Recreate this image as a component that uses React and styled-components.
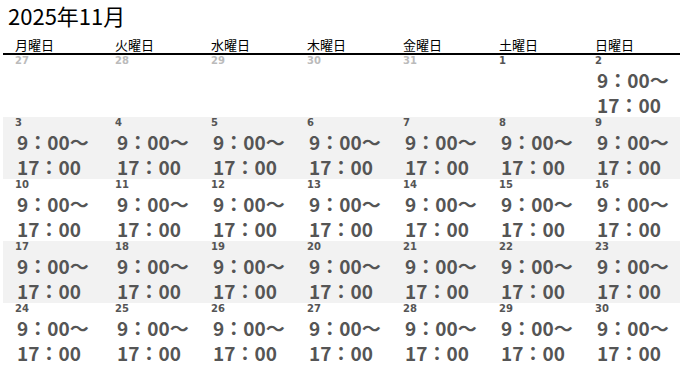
import styled, { createGlobalStyle } from "styled-components";

const GlobalStyle = createGlobalStyle`
  body {
    margin: 0;
    background: #fff;
    font-family: "Noto Sans CJK JP", "DejaVu Sans", sans-serif;
  }
`;

const DAYS = ["月曜日", "火曜日", "水曜日", "木曜日", "金曜日", "土曜日", "日曜日"];

const WEEKS = [
  [
    { d: 27, out: true },
    { d: 28, out: true },
    { d: 29, out: true },
    { d: 30, out: true },
    { d: 31, out: true },
    { d: 1, blank: true },
    { d: 2 },
  ],
  [3, 4, 5, 6, 7, 8, 9].map((d) => ({ d })),
  [10, 11, 12, 13, 14, 15, 16].map((d) => ({ d })),
  [17, 18, 19, 20, 21, 22, 23].map((d) => ({ d })),
  [24, 25, 26, 27, 28, 29, 30].map((d) => ({ d })),
];

const App = () => {
  return (
    <>
      <GlobalStyle />
      <Page>
        <Title>2025年11月</Title>
        <HeadRow>
          {DAYS.map((day) => (
            <HeadCell key={day}>{day}</HeadCell>
          ))}
        </HeadRow>
        {WEEKS.map((week, i) => (
          <WeekRow key={i} $shaded={i % 2 === 1}>
            {week.map((cell) => (
              <DayCell key={cell.d}>
                <DateNum $out={cell.out}>{cell.d}</DateNum>
                {!cell.out && !cell.blank && (
                  <>
                    <Hours>9：00～</Hours>
                    <Hours>17：00</Hours>
                  </>
                )}
              </DayCell>
            ))}
          </WeekRow>
        ))}
      </Page>
    </>
  );
};

export default App;

// style
const Page = styled.div`
  width: 677px;
  padding: 0 0 0 3px;
`;
const Title = styled.h1`
  margin: 0;
  padding-left: 5px;
  height: 30px;
  line-height: 30px;
  font-size: 22px;
  font-weight: 400;
  color: #000;
`;
const Columns = styled.div`
  display: grid;
  grid-template-columns: 100px repeat(5, 96px) 1fr;
`;
const HeadRow = styled(Columns)`
  height: 23px;
  border-bottom: 2px solid #000;
`;
const HeadCell = styled.div`
  padding: 7px 0 0 12px;
  font-size: 13px;
  line-height: 16px;
  color: #000;
`;
const WeekRow = styled(Columns)`
  height: 62px;
  background-color: ${({ $shaded }) => ($shaded ? "#f2f2f2" : "#fff")};
`;
const DayCell = styled.div`
  padding-left: 12px;
  white-space: nowrap;
`;
const DateNum = styled.div`
  height: 12px;
  font-family: "DejaVu Sans", sans-serif;
  font-size: 10px;
  line-height: 12px;
  font-weight: 700;
  color: ${({ $out }) => ($out ? "#bbb" : "#555")};
`;
const Hours = styled.div`
  padding-left: 2px;
  height: 25px;
  font-size: 19px;
  line-height: 25px;
  font-weight: 700;
  color: #555;
`;
